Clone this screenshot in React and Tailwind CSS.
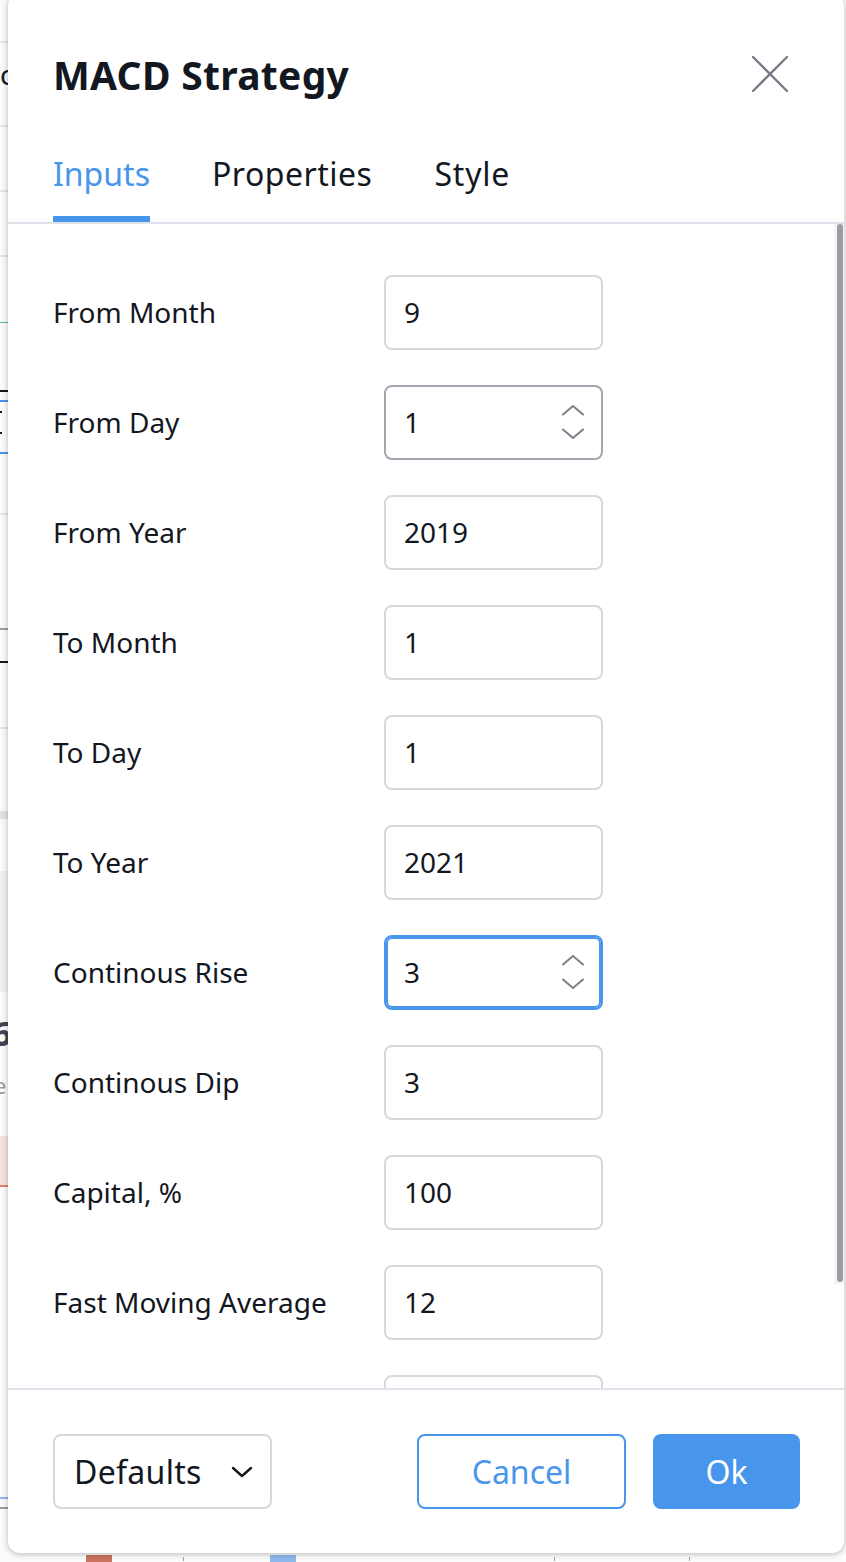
import React from "react";

const rows = [
  { label: "From Month", value: "9" },
  { label: "From Day", value: "1", state: "hover" },
  { label: "From Year", value: "2019" },
  { label: "To Month", value: "1" },
  { label: "To Day", value: "1" },
  { label: "To Year", value: "2021" },
  { label: "Continous Rise", value: "3", state: "focus" },
  { label: "Continous Dip", value: "3" },
  { label: "Capital, %", value: "100" },
  { label: "Fast Moving Average", value: "12" },
  { label: "Slow Moving Average", value: "26" },
];

// background chart fragments visible in the thin strip left of the dialog
const strip = [
  "h-[41px]",
  "h-[2px] bg-[#e3e5ea]",
  "h-[17px]",
  "text:c",
  "h-[37px]",
  "h-[2px] bg-[#e3e5ea]",
  "h-[63px]",
  "h-[2px] bg-[#e3e5ea]",
  "h-[63px]",
  "h-[2px] bg-[#e3e5ea]",
  "h-[65px]",
  "h-[1px] bg-[#5fb3a8]",
  "h-[67px]",
  "h-[2px] bg-[#131722]",
  "h-[8px]",
  "h-[2px] bg-[#4896eb]",
  "h-[9px]",
  "h-[2px] w-[2px] bg-[#131722]",
  "h-[19px]",
  "h-[2px] w-[2px] bg-[#131722]",
  "h-[18px]",
  "h-[2px] bg-[#4896eb]",
  "h-[59px]",
  "h-[2px] bg-[#e3e5ea]",
  "h-[113px]",
  "h-[2px] bg-[#9a9ca3]",
  "h-[31px]",
  "h-[2px] bg-[#131722]",
  "h-[64px]",
  "h-[2px] bg-[#e3e5ea]",
  "h-[82px]",
  "h-[8px] bg-[#dfe1e6]",
  "h-[52px]",
  "h-[121px] bg-[#eff0f3]",
  "h-[24px]",
  "text:6",
  "h-[24px]",
  "text:e",
  "h-[40px]",
  "h-[49px] bg-[#f7e3de]",
  "h-[2px] bg-[#e3836c]",
  "h-[310px]",
  "h-[2px] bg-[#8fb9ec]",
  "h-[8px]",
  "h-[2px] bg-[#9a9ca3]",
];

function StripItem({ spec }) {
  if (spec === "text:c")
    return <div className="h-[28px] text-[28px] leading-none text-[#131722]">c</div>;
  if (spec === "text:6")
    return <div className="h-[34px] ml-[-8px] text-[34px] font-bold leading-none text-[#434651]">6</div>;
  if (spec === "text:e")
    return <div className="h-[22px] ml-[-6px] text-[22px] leading-none text-[#9a9ca3]">e</div>;
  return <div className={`shrink-0 ${spec.includes("w-[") ? "" : "w-full"} ${spec}`} />;
}

function Spinner() {
  return (
    <div className="flex flex-col items-center gap-[12px] mr-[16px]">
      <svg width="24" height="12" viewBox="0 0 24 12" fill="none">
        <path d="M2 10.5 L12 2 L22 10.5" stroke="#7c7f89" strokeWidth="2" strokeLinecap="round" strokeLinejoin="round" />
      </svg>
      <svg width="24" height="12" viewBox="0 0 24 12" fill="none">
        <path d="M2 1.5 L12 10 L22 1.5" stroke="#7c7f89" strokeWidth="2" strokeLinecap="round" strokeLinejoin="round" />
      </svg>
    </div>
  );
}

function Row({ label, value, state }) {
  let box = "border-[#d6d8de]";
  let extra = "";
  if (state === "hover") box = "border-[#a4a7b0]";
  if (state === "focus") {
    box = "border-[#4896eb]";
    extra = "shadow-[inset_0_0_0_2px_#4896eb]";
  }
  return (
    <div className="flex items-center h-[74px] shrink-0">
      <div className="w-[331px] text-[28px] text-[#131722] leading-none">{label}</div>
      <div
        className={`w-[219px] h-[75px] border-2 ${box} ${extra} rounded-[8px] flex items-center justify-between pl-[18px] text-[28px] text-[#131722] leading-none`}
      >
        <span>{value}</span>
        {state ? <Spinner /> : null}
      </div>
    </div>
  );
}

export default function App() {
  return (
    <div
      className="w-[846px] h-[1562px] overflow-hidden bg-[#fbfbfc] flex"
      style={{ fontFamily: '"Noto Sans", "Open Sans", sans-serif' }}
    >
      {/* left background strip */}
      <div className="w-[8px] shrink-0 flex flex-col overflow-hidden">
        {strip.map((s, i) => (
          <StripItem key={i} spec={s} />
        ))}
      </div>

      {/* dialog column */}
      <div className="w-[836px] shrink-0 flex flex-col">
        <div className="relative z-10 mt-[-6px] h-[1559px] bg-white rounded-[12px] shadow-[0_1px_6px_rgba(0,0,0,0.28)] flex flex-col overflow-hidden shrink-0">
          {/* header */}
          <div className="h-[136px] pt-[24px] pl-[45px] pr-[56px] flex items-center justify-between shrink-0">
            <div className="text-[39px] font-bold text-[#131722] leading-none tracking-[0.3px]">MACD Strategy</div>
            <svg width="36" height="36" viewBox="0 0 36 36" fill="none">
              <path d="M1 1 L35 35 M35 1 L1 35" stroke="#787b86" strokeWidth="2.4" strokeLinecap="round" />
            </svg>
          </div>

          {/* tabs */}
          <div className="h-[94px] shrink-0 border-b-2 border-[#e0e3eb] pl-[45px] flex gap-[62px]">
            <div className="relative flex items-center pb-[4px] text-[32px] leading-none text-[#4896eb]">
              Inputs
              <div className="absolute left-0 right-0 bottom-0 h-[6px] bg-[#4896eb]" />
            </div>
            <div className="flex items-center pb-[4px] text-[32px] leading-none text-[#131722] tracking-[0.5px]">Properties</div>
            <div className="flex items-center pb-[4px] text-[32px] leading-none text-[#131722] tracking-[0.8px]">Style</div>
          </div>

          {/* content */}
          <div className="h-[1164px] shrink-0 overflow-hidden flex">
            <div className="flex-1 flex flex-col gap-[36px] pt-[51px] pl-[45px]">
              {rows.map((r) => (
                <Row key={r.label} {...r} />
              ))}
            </div>
            <div className="w-[10px] h-[1060px] bg-[#f5f5f6] flex justify-end pr-[1px]">
              <div className="w-[6px] h-[1058px] rounded-full bg-[#9b9da4]" />
            </div>
          </div>

          {/* footer */}
          <div className="flex-1 border-t-2 border-[#e0e3eb] pl-[45px] pr-[44px] flex items-center justify-between">
            <div className="w-[219px] h-[75px] border-2 border-[#d6d8de] rounded-[8px] flex items-center justify-between pl-[19px] pr-[17px] text-[32px] leading-none text-[#131722] tracking-[0.3px]">
              <span>Defaults</span>
              <svg width="22" height="12" viewBox="0 0 22 12" fill="none">
                <path d="M2 2 L11 10 L20 2" stroke="#131722" strokeWidth="2.4" strokeLinecap="round" strokeLinejoin="round" />
              </svg>
            </div>
            <div className="flex gap-[27px]">
              <div className="w-[209px] h-[75px] border-2 border-[#4896eb] rounded-[8px] flex items-center justify-center text-[32px] leading-none text-[#4896eb]">
                Cancel
              </div>
              <div className="w-[147px] h-[75px] bg-[#4896eb] rounded-[8px] flex items-center justify-center text-[32px] leading-none text-white">
                Ok
              </div>
            </div>
          </div>
        </div>

        {/* bottom background strip */}
        <div className="flex-1 flex items-start pt-[2px]">
          <div className="ml-[78px] w-[26px] h-[10px] bg-[#c9735f]" />
          <div className="ml-[71px] mt-[2px] w-[1px] h-[4px] bg-[#9a9ca3]" />
          <div className="ml-[86px] w-[26px] h-[10px] bg-[#8fb9ec]" />
          <div className="ml-[258px] mt-[2px] w-[1px] h-[4px] bg-[#9a9ca3]" />
          <div className="ml-[134px] mt-[2px] w-[1px] h-[4px] bg-[#9a9ca3]" />
        </div>
      </div>

      {/* right background strip */}
      <div className="w-[2px] shrink-0 bg-[#fbfbfc]" />
    </div>
  );
}
